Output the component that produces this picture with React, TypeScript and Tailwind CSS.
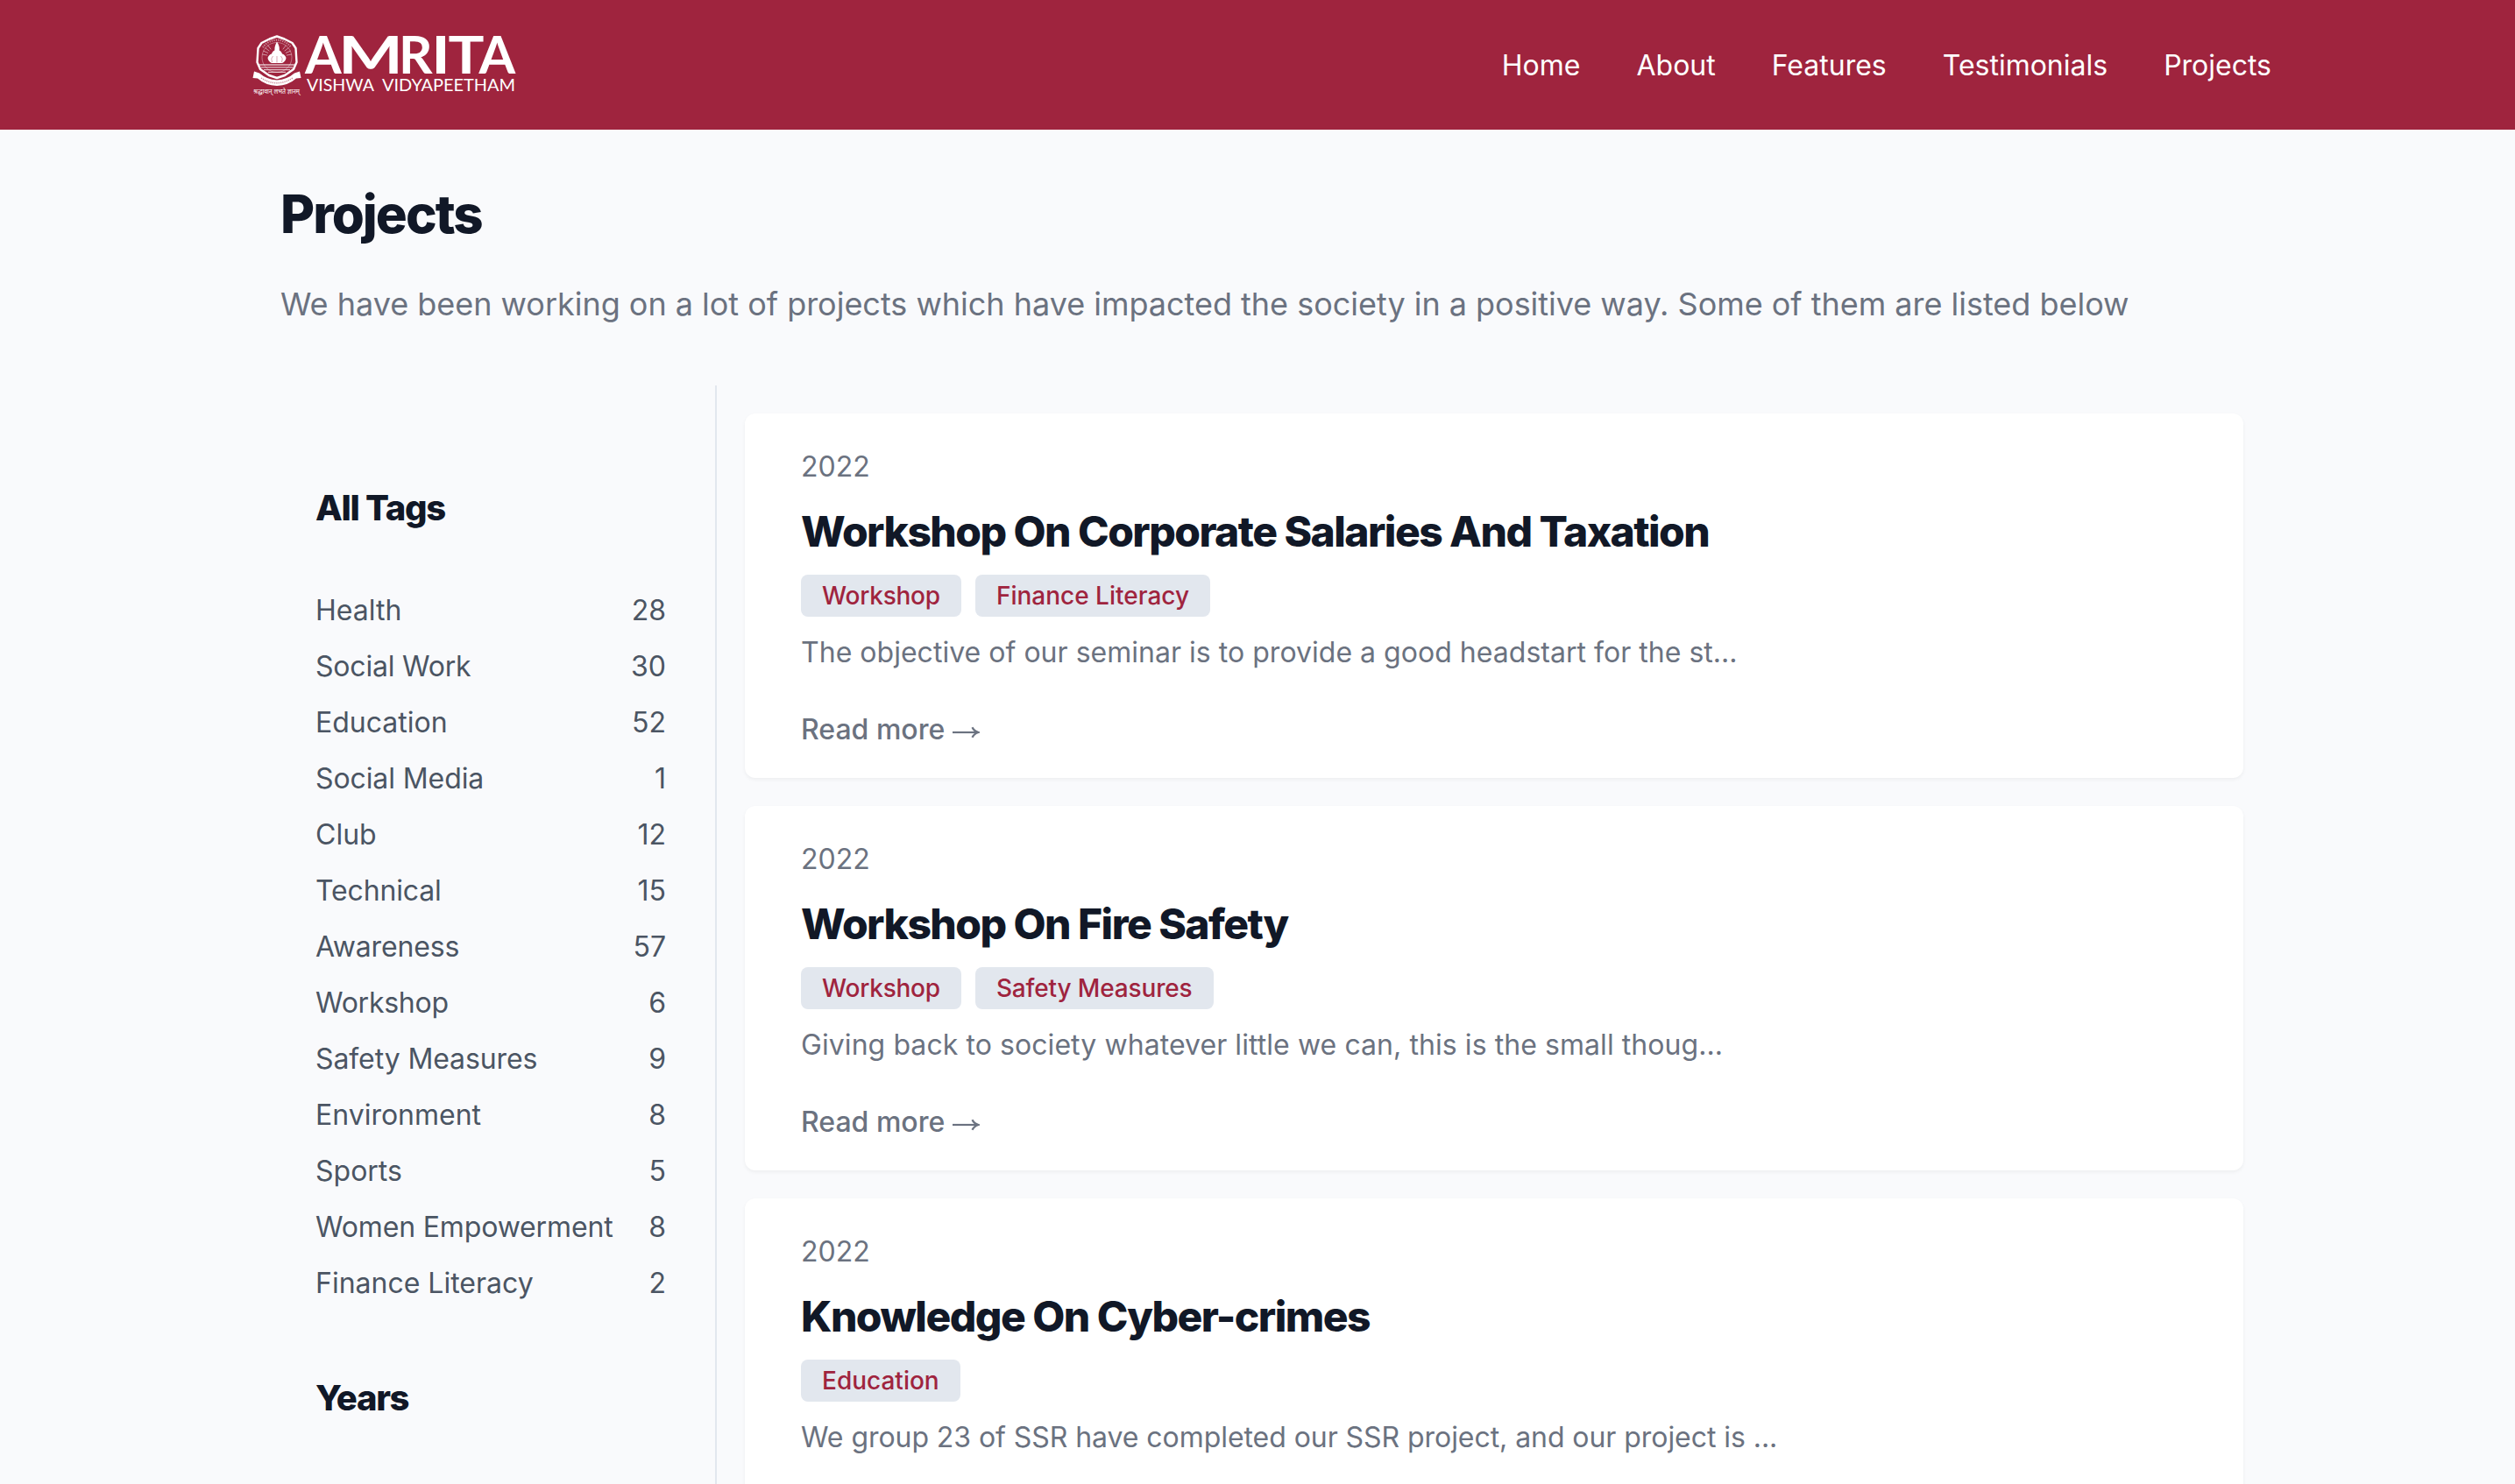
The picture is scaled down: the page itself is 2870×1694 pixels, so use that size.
const navItems = ['Home', 'About', 'Features', 'Testimonials', 'Projects']

type Tag = { name: string; count: number; tracking?: string }

const tags: Tag[] = [
  { name: 'Health', count: 28 },
  { name: 'Social Work', count: 30, tracking: 'tracking-[-0.2px]' },
  { name: 'Education', count: 52 },
  { name: 'Social Media', count: 1, tracking: 'tracking-[-0.1px]' },
  { name: 'Club', count: 12 },
  { name: 'Technical', count: 15, tracking: 'tracking-[-0.15px]' },
  { name: 'Awareness', count: 57, tracking: 'tracking-[-0.15px]' },
  { name: 'Workshop', count: 6, tracking: 'tracking-[-0.25px]' },
  { name: 'Safety Measures', count: 9, tracking: 'tracking-[-0.1px]' },
  { name: 'Environment', count: 8 },
  { name: 'Sports', count: 5 },
  { name: 'Women Empowerment', count: 8, tracking: 'tracking-[-0.15px]' },
  { name: 'Finance Literacy', count: 2 },
]

type Project = { year: string; title: string; tags: string[]; text: string; tracking: string }

const projects: Project[] = [
  {
    year: '2022',
    title: 'Workshop On Corporate Salaries And Taxation',
    tags: ['Workshop', 'Finance Literacy'],
    text: 'The objective of our seminar is to provide a good headstart for the st...',
    tracking: 'tracking-[0.025px]',
  },
  {
    year: '2022',
    title: 'Workshop On Fire Safety',
    tags: ['Workshop', 'Safety Measures'],
    text: 'Giving back to society whatever little we can, this is the small thoug...',
    tracking: 'tracking-[0.07px]',
  },
  {
    year: '2022',
    title: 'Knowledge On Cyber-crimes',
    tags: ['Education'],
    text: 'We group 23 of SSR have completed our SSR project, and our project is ...',
    tracking: 'tracking-[-0.06px]',
  },
]

const badgeTracking: Record<string, string> = {
  Workshop: 'tracking-[-0.22px]',
  'Safety Measures': 'tracking-[-0.15px]',
}

function Emblem() {
  const rays = [-80, -66, -52, -38, 38, 52, 66, 80]
  return (
    <g fill="none" stroke="white">
      {/* medallion */}
      <path
        d="M28 4.5 L36.5 7.5 L45.5 12 L49.5 18 L50.5 34 L47 42 L37 49 L28 52 L19 49 L9 42 L5.5 34 L6.5 18 L10.5 12 L19.5 7.5 Z"
        strokeWidth="2.4"
        strokeLinejoin="round"
      />
      <circle cx="28" cy="28.5" r="17" strokeWidth="0.7" opacity="0.5" />
      <path d="M12 17 A19.5 19.5 0 0 1 44 17" strokeWidth="2.2" strokeDasharray="1.2 1.3" opacity="0.5" />
      {rays.map((a) => (
        <line key={a} x1="28" y1="17" x2="28" y2="11" transform={`rotate(${a} 28 28)`} strokeWidth="0.8" opacity="0.6" />
      ))}
      {/* flame and lotus */}
      <path d="M28 10.5 Q24 18 26 22 L30 22 Q32.5 18 28 10.5 Z" fill="white" stroke="none" />
      <path
        d="M17.5 29 Q19 25 22 24.5 Q23 20.5 28 19.5 Q33 20.5 34 24.5 Q37 25 38.5 29 Q38 33 34 35 L22 35 Q18 33 17.5 29 Z"
        fill="white"
        stroke="none"
      />
      <path d="M22.5 34 Q20.5 29.5 23.5 27 M28 34.5 V27 M33.5 34 Q35.5 29.5 32.5 27" stroke="#9f243e" strokeWidth="0.7" opacity="0.6" />
      {/* water */}
      <path d="M8 37 H48 M9.5 39.8 H46.5 M13 42.6 H43 M18 45.4 H38" strokeWidth="1.3" opacity="0.7" />
      {/* ribbon */}
      <path
        d="M2 44.5 L8 46.5 Q16 53.5 28 54.5 Q40 53.5 48 46.5 L54 44.5 L55.5 52 L50 52.5 Q41 60.5 28 61 Q15 60.5 6 52.5 L0.5 52 Z"
        fill="white"
        stroke="none"
      />
      <path d="M10 52 Q18 57.5 28 57.8 Q38 57.5 46 52" stroke="#9f243e" strokeWidth="1.5" strokeDasharray="1.3 1" opacity="0.5" />
    </g>
  )
}

function Logo() {
  return (
    <svg className="block h-[74px] w-[304px] overflow-visible" viewBox="0 0 304 74" fill="white">
      <Emblem />
      <text x="1" y="69.5" fontSize="8" textLength="53" lengthAdjust="spacingAndGlyphs" fontFamily="'Noto Sans Devanagari', 'Noto Sans', sans-serif">
        श्रद्धावान् लभते ज्ञानम्
      </text>
      <g fontFamily="Lato, sans-serif" fontWeight="700" fontSize="60">
        <text x="60" y="47">A</text>
        <text x="98" y="47" textLength="74" lengthAdjust="spacingAndGlyphs">M</text>
        <text x="167" y="47">R</text>
        <text x="204" y="47" textLength="22" lengthAdjust="spacingAndGlyphs">I</text>
        <text x="223.5" y="47" textLength="41" lengthAdjust="spacingAndGlyphs">T</text>
        <text x="258.5" y="47">A</text>
      </g>
      <g fontFamily="Lato, sans-serif" fontSize="19.5">
        <text x="62" y="66.5" textLength="77" lengthAdjust="spacingAndGlyphs">VISHWA</text>
        <text x="148" y="66.5" textLength="152" lengthAdjust="spacingAndGlyphs">VIDYAPEETHAM</text>
      </g>
    </svg>
  )
}

function Arrow() {
  return (
    <svg className="mt-[6px] ml-[9px] h-[14px] w-[31px]" viewBox="0 0 31 14" fill="none" stroke="currentColor">
      <path d="M0 7 H28.5" strokeWidth="2.2" />
      <path d="M22.5 1.2 Q24.5 5.4 29.5 7 Q24.5 8.6 22.5 12.8" strokeWidth="2.3" />
    </svg>
  )
}

function ProjectCard({ project }: { project: Project }) {
  return (
    <article className="rounded-xl bg-white px-16 pt-[37px] pb-[31px] text-[32px] leading-[48px] text-[#6b7280] shadow-[0_2px_4px_rgba(0,0,0,0.05)]">
      <p>{project.year}</p>
      <h2 className="mt-[18px] text-[48px] leading-[64px] font-extrabold tracking-[-0.032em] text-[#111827]">{project.title}</h2>
      <div className="mt-[17px] flex gap-4">
        {project.tags.map((tag) => (
          <span
            key={tag}
            className={`rounded-lg bg-[#e2e7ee] px-6 text-[28px] leading-[48px] font-medium text-[#9f243e] ${badgeTracking[tag] ?? ''}`}
          >
            {tag}
          </span>
        ))}
      </div>
      <p className={`mt-[17px] ${project.tracking}`}>{project.text}</p>
      <a className="mt-10 flex items-center font-medium">
        Read more
        <Arrow />
      </a>
    </article>
  )
}

export default function App() {
  return (
    <div className="h-[1694px] w-[2870px] overflow-hidden bg-[#f9fafc] font-['Inter',sans-serif]">
      <div className="w-[2880px]">
        <header className="bg-[#9f243e]">
          <div className="mx-auto flex h-[148px] w-[2304px] items-center justify-between">
            <Logo />
            <nav className="flex gap-16 pt-[2px] text-[32px] leading-[48px] text-white">
              {navItems.map((item) => (
                <a key={item}>{item}</a>
              ))}
            </nav>
          </div>
        </header>
        <main className="mx-auto w-[2240px] pt-[60px]">
          <h1 className="text-[60px] leading-[72px] font-extrabold tracking-[-0.033em] text-[#111827]">Projects</h1>
          <p className="mt-[39px] text-[36px] leading-[56px] tracking-[-0.02px] whitespace-nowrap text-[#6b7280]">
            We have been working on a lot of projects which have impacted the society in a positive way. Some of them are
            listed below
          </p>
          <div className="mt-[65px] flex">
            <aside className="w-[498px] shrink-0 border-r-2 border-[#e2e7ee] pt-[116px] pr-14 pl-10">
              <h3 className="text-[40px] leading-[48px] font-extrabold tracking-[-0.033em] text-[#111827]">All Tags</h3>
              <ul className="mt-[69px] flex flex-col gap-4 text-[32px] leading-[48px] text-[#4b5563]">
                {tags.map(({ name, count, tracking }) => (
                  <li key={name} className="flex justify-between">
                    <span className={tracking}>{name}</span>
                    <span>{count}</span>
                  </li>
                ))}
              </ul>
              <h3 className="mt-[83px] text-[40px] leading-[48px] font-extrabold tracking-[-0.033em] text-[#111827]">Years</h3>
            </aside>
            <section className="flex grow flex-col gap-8 pt-8 pl-8">
              {projects.map((p) => (
                <ProjectCard key={p.title} project={p} />
              ))}
            </section>
          </div>
        </main>
      </div>
    </div>
  )
}
